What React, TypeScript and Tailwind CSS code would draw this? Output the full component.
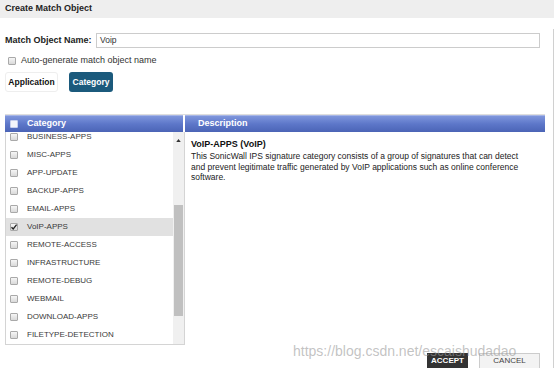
const categories = [
  "BUSINESS-APPS",
  "MISC-APPS",
  "APP-UPDATE",
  "BACKUP-APPS",
  "EMAIL-APPS",
  "VoIP-APPS",
  "REMOTE-ACCESS",
  "INFRASTRUCTURE",
  "REMOTE-DEBUG",
  "WEBMAIL",
  "DOWNLOAD-APPS",
  "FILETYPE-DETECTION",
];

function Box({ checked = false, light = false }: { checked?: boolean; light?: boolean }) {
  return (
    <span
      className={`relative inline-block w-[8px] h-[8px] shrink-0 rounded-[1px] border ${
        light
          ? "border-[#c8d0ee] bg-[#f4f5fb]"
          : "border-[#a9a9a9] bg-gradient-to-b from-[#f6f6f6] to-[#d9d9d9]"
      }`}
    >
      {checked && (
        <svg viewBox="0 0 8 8" className="absolute left-[-1px] top-[-1px] w-[8px] h-[8px]">
          <path d="M1.5 4.2 L3.2 6 L6.6 1.6" fill="none" stroke="#222" strokeWidth="1.3" />
        </svg>
      )}
    </span>
  );
}

export default function App() {
  return (
    <div className="relative w-[554px] h-[368px] overflow-hidden bg-white text-[#222] font-['Liberation_Sans',Arial,sans-serif]">
      <div className="h-[18px] bg-[#eeeeee] px-[5px] flex items-center text-[9px] font-bold text-[#222]">
        Create Match Object
      </div>

      <div className="mt-[11px] h-[339px] border-r border-[#d0d0d0] pl-[5px] pt-[4px]">
        {/* name */}
        <div className="flex items-center h-[15px] gap-[4px]">
          <span className="text-[9px] font-bold w-[87px]">Match Object Name:</span>
          <div className="w-[444px] h-[15px] border border-[#cccccc] flex items-center pl-[3px] text-[8.5px] text-[#333]">
            Voip
          </div>
        </div>

        <div className="mt-[7px] h-[12px] flex items-center gap-[5px] pl-[3px] text-[9px] text-[#333]">
          <Box />
          <span>Auto-generate match object name</span>
        </div>

        <div className="mt-[5px] flex gap-[11px] h-[20px]">
          <button className="w-[53px] h-[20px] rounded-[3px] border border-[#eeeeee] bg-white text-[8.5px] font-bold text-[#111]">
            Application
          </button>
          <button className="w-[44px] h-[20px] rounded-[3px] bg-[#1b5a7c] text-[8.5px] font-bold text-white">
            Category
          </button>
        </div>

        {/* table */}
        <div className="mt-[22px] w-[540px] border-t border-[#dedede]">
          <div className="flex h-[17px] text-white text-[9px] font-bold">
            <div className="w-[178px] flex items-center gap-[9px] pl-[5px] bg-gradient-to-b from-[#7f96dc] via-[#5d77c9] to-[#4b64b6] border-t border-[#a6b5e6]">
              <Box light />
              <span>Category</span>
            </div>
            <div className="w-[2px]" />
            <div className="flex-1 flex items-center pl-[13px] bg-gradient-to-b from-[#7f96dc] via-[#5d77c9] to-[#4b64b6] border-t border-[#a6b5e6]">
              Description
            </div>
          </div>

          <div className="flex">
            <div className="w-[180px] h-[213px] flex border-l border-r border-b border-[#d4d4d4]">
              <div className="flex-1 overflow-hidden">
                <div className="-mt-[4px]">
                  {categories.map((c) => (
                    <div
                      key={c}
                      className={`h-[18px] flex items-center gap-[9px] pl-[4px] text-[8px] text-[#3a3a3a] ${
                        c === "VoIP-APPS" ? "bg-[#e1e1e1]" : ""
                      }`}
                    >
                      <Box checked={c === "VoIP-APPS"} />
                      <span>{c}</span>
                    </div>
                  ))}
                </div>
              </div>
              <div className="w-[11px] bg-[#f0f0f0] flex flex-col items-center">
                <svg viewBox="0 0 6 4" className="mt-[7px] w-[5px] h-[3px]">
                  <path d="M0 4 L3 0 L6 4 Z" fill="#333" />
                </svg>
                <div className="mt-[63px] w-[9px] h-[111px] bg-[#c0c0c0]" />
              </div>
            </div>

            <div className="flex-1 pl-[6px] pt-[7px]">
              <div className="text-[9px] font-bold leading-[11px] text-[#111]">VoIP-APPS (VoIP)</div>
              <div className="mt-[1px] text-[8.5px] leading-[10.5px] text-[#222]">
                This SonicWall IPS signature category consists of a group of signatures that can detect
                <br />
                and prevent legitimate traffic generated by VoIP applications such as online conference
                <br />
                software.
              </div>
            </div>
          </div>
        </div>

        <div className="mt-[8px] ml-[422px] flex gap-[11px]">
          <button className="w-[41px] h-[16px] bg-[#333333] text-white text-[8px] font-bold">ACCEPT</button>
          <button className="w-[61px] h-[16px] bg-[#f3f3f3] border border-[#cccccc] text-[#444] text-[8px]">
            CANCEL
          </button>
        </div>
      </div>

      <div className="absolute left-[293px] top-[341px] text-[14px] text-[#9a9a9a]/60 whitespace-nowrap pointer-events-none">
        https://blog.csdn.net/escaishudadao
      </div>
    </div>
  );
}
